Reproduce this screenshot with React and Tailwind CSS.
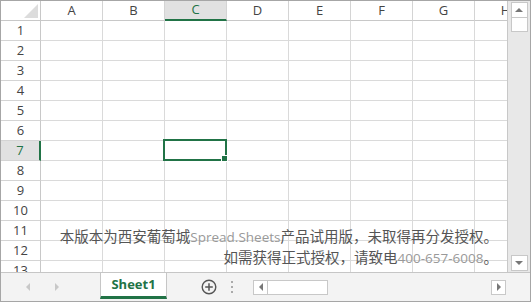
import React from "react";

const cols = ["A", "B", "C", "D", "E", "F", "G", "H"];
const rows = [1, 2, 3, 4, 5, 6, 7, 8, 9, 10, 11, 12, 13];

const font = "font-['Open_Sans','Noto_Sans_CJK_SC',sans-serif]";

function Corner() {
  return (
    <div className="relative w-[40px] h-[20px] shrink-0 border-r border-b border-[#c8c8c8] bg-white">
      <svg className="absolute right-[2px] bottom-[2px]" width="14" height="14" viewBox="0 0 14 14">
        <polygon points="14,0 14,14 0,14" fill="#dcdcdc" />
      </svg>
    </div>
  );
}

function ColHeader({ name }) {
  const sel = name === "C";
  return (
    <div
      className={
        "w-[62px] h-[20px] shrink-0 border-r border-[#d4d4d4] flex items-center justify-center text-[13px] " +
        (sel ? "bg-[#e1e1e1] text-[#217346] border-b-2 border-b-[#217346]" : "bg-white text-[#444] border-b border-b-[#c8c8c8]")
      }
    >
      {name}
    </div>
  );
}

function RowHeader({ n }) {
  const sel = n === 7;
  return (
    <div
      className={
        "w-[40px] h-[20px] shrink-0 border-b border-[#d4d4d4] flex items-center justify-center text-[13px] " +
        (sel ? "bg-[#e1e1e1] text-[#217346] border-r-2 border-r-[#217346]" : "bg-white text-[#444] border-r border-r-[#c8c8c8]")
      }
    >
      {n}
    </div>
  );
}

function Cell({ active }) {
  return (
    <div className="relative w-[62px] h-[20px] shrink-0 border-r border-b border-[#dadada] bg-white">
      {active && (
        <div className="absolute -left-[2px] -top-[2px] w-[64px] h-[22px] border-2 border-[#217346] z-10">
          <div className="absolute -right-[3px] -bottom-[3px] w-[5px] h-[5px] bg-[#217346] border border-white box-content" />
        </div>
      )}
    </div>
  );
}

function Arrow({ dir, color = "#777" }) {
  const pts = {
    up: "1,6 5,2 9,6",
    down: "1,2 5,6 9,2",
    left: "6,1 2,5 6,9",
    right: "2,1 6,5 2,9",
  }[dir];
  const vb = dir === "up" || dir === "down" ? "0 0 10 8" : "0 0 8 10";
  const w = dir === "up" || dir === "down" ? 10 : 8;
  const h = dir === "up" || dir === "down" ? 8 : 10;
  return (
    <svg width={w} height={h} viewBox={vb}>
      <polygon points={pts} fill={color} />
    </svg>
  );
}

export default function App() {
  return (
    <div className={"w-[531px] h-[302px] border border-[#a6a6a6] flex flex-col bg-white overflow-hidden " + font}>
      <div className="flex h-[271px]">
        {/* grid */}
        <div className="relative flex-1 overflow-hidden">
          <div className="flex">
            <Corner />
            {cols.map((c) => (
              <ColHeader key={c} name={c} />
            ))}
          </div>
          {rows.map((r) => (
            <div key={r} className="flex">
              <RowHeader n={r} />
              {cols.map((c) => (
                <Cell key={c} active={r === 7 && c === "C"} />
              ))}
            </div>
          ))}
          <div className="absolute right-[9px] top-[225px] flex flex-col items-end text-[14.5px] leading-[20px] text-[#555] font-['Noto_Sans_CJK_SC',sans-serif]">
            <div>
              本版本为西安葡萄城<span className="text-[13.5px] text-[#999] font-['Open_Sans',sans-serif]">Spread.Sheets</span>产品试用版，未取得再分发授权。
            </div>
            <div>
              如需获得正式授权，请致电<span className="text-[13.5px] text-[#999] font-['Open_Sans',sans-serif]">400-657-6008</span>。
            </div>
          </div>
        </div>
        {/* vertical scrollbar */}
        <div className="w-[23px] shrink-0 border-l border-[#c8c8c8] bg-[#e8e8e8] flex flex-col items-center pt-[1px] pb-[1px]">
          <div className="w-[17px] h-[16px] bg-white border border-[#c8c8c8] flex items-center justify-center">
            <Arrow dir="up" />
          </div>
          <div className="w-[17px] h-[14px] bg-white border border-[#c8c8c8] border-t-0" />
          <div className="flex-1" />
          <div className="w-[17px] h-[16px] bg-white border border-[#c8c8c8] flex items-center justify-center">
            <Arrow dir="down" />
          </div>
        </div>
      </div>
      {/* tab bar */}
      <div className="flex-1 flex items-stretch bg-[#f3f3f3] border-t border-[#c6c6c6]">
        <div className="w-[99px] shrink-0 flex items-center">
          <div className="w-[31px] flex justify-end">
            <Arrow dir="left" color="#c8c8c8" />
          </div>
          <div className="ml-[21px]">
            <Arrow dir="right" color="#c8c8c8" />
          </div>
        </div>
        <div className="w-[67px] shrink-0 bg-white border-l border-r border-[#c6c6c6] border-b-[3px] border-b-[#217346] flex items-center justify-center text-[13px] font-bold text-[#217346] mb-[2px]">
          Sheet1
        </div>
        <div className="w-[86px] shrink-0 flex items-center">
          <svg className="ml-[34px]" width="16" height="16" viewBox="0 0 16 16">
            <circle cx="8" cy="8" r="6.8" fill="none" stroke="#555" strokeWidth="1.4" />
            <line x1="8" y1="4.2" x2="8" y2="11.8" stroke="#555" strokeWidth="1.5" />
            <line x1="4.2" y1="8" x2="11.8" y2="8" stroke="#555" strokeWidth="1.5" />
          </svg>
          <div className="ml-[14px] flex flex-col gap-[3px]">
            <div className="w-[2px] h-[2px] bg-[#aaa]" />
            <div className="w-[2px] h-[2px] bg-[#aaa]" />
            <div className="w-[2px] h-[2px] bg-[#aaa]" />
          </div>
        </div>
        <div className="flex items-center">
          <div className="w-[253px] h-[15px] flex">
            <div className="w-[15px] h-[15px] bg-white border border-[#c8c8c8] flex items-center justify-center">
              <Arrow dir="left" />
            </div>
            <div className="w-[60px] h-[15px] bg-white border border-l-0 border-[#c8c8c8]" />
            <div className="flex-1" />
            <div className="w-[15px] h-[15px] bg-white border border-[#c8c8c8] flex items-center justify-center">
              <Arrow dir="right" />
            </div>
          </div>
        </div>
      </div>
    </div>
  );
}
